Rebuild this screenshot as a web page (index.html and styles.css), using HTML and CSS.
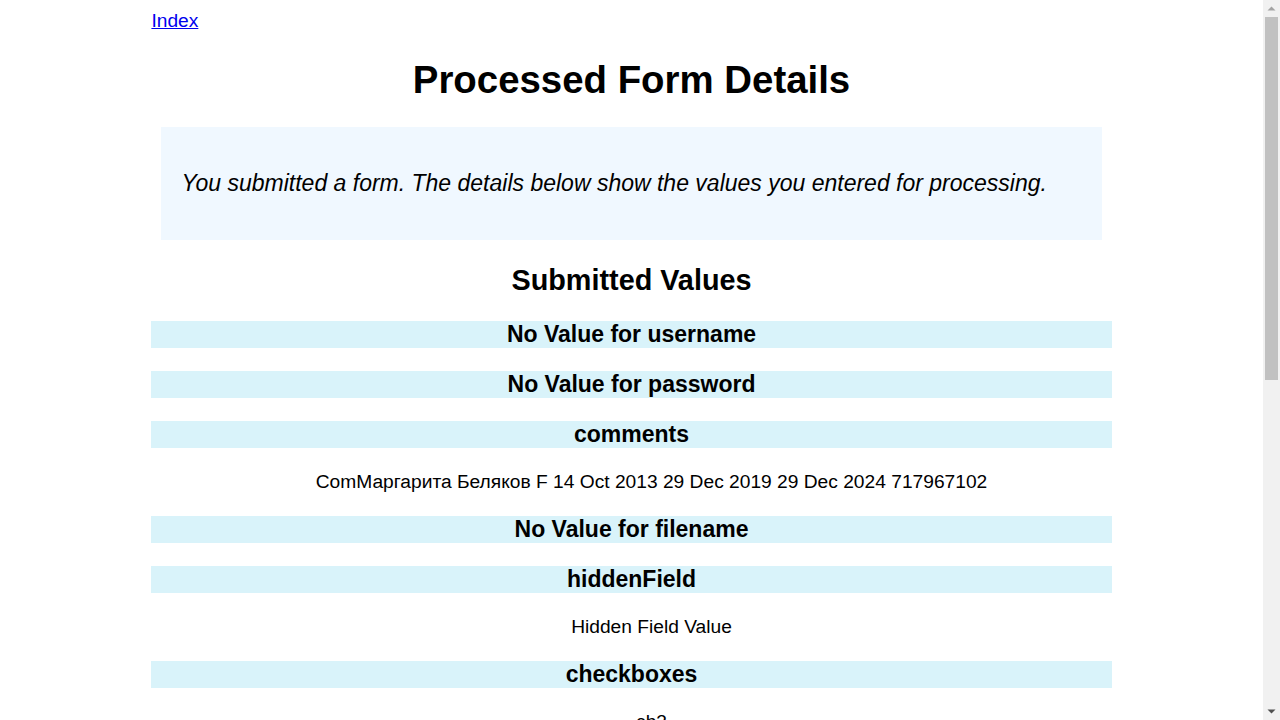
FILE: index.html
```html
<!DOCTYPE html>
<html lang="en">
<head>
<meta charset="utf-8">
<title>Processed Form Details</title>
<link rel="stylesheet" href="styles.css">
</head>
<body>
<div class="page">
  <div class="nav"><a href="#">Index</a></div>
  <h1>Processed Form Details</h1>
  <div class="explanation">
    <p>You submitted a form. The details below show the values you entered for processing.</p>
  </div>
  <h2>Submitted Values</h2>
  <div class="results">
    <h3 class="label">No Value for username</h3>
    <h3 class="label">No Value for password</h3>
    <h3 class="label">comments</h3>
    <ul class="values"><li>ComМаргарита Беляков F 14 Oct 2013 29 Dec 2019 29 Dec 2024 717967102</li></ul>
    <h3 class="label">No Value for filename</h3>
    <h3 class="label">hiddenField</h3>
    <ul class="values"><li>Hidden Field Value</li></ul>
    <h3 class="label">checkboxes</h3>
    <ul class="values"><li>cb3</li></ul>
    <h3 class="label">radioval</h3>
    <ul class="values"><li>rd2</li></ul>
    <h3 class="label">multipleselect</h3>
    <ul class="values"><li>ms4</li></ul>
    <h3 class="label">dropdown</h3>
    <ul class="values"><li>dd3</li></ul>
    <h3 class="label">submitbutton</h3>
    <ul class="values"><li>submit</li></ul>
  </div>
</div>
<div class="scrollbar" aria-hidden="true">
  <div class="sb-arrow sb-up"><svg width="17" height="17" viewBox="0 0 17 17"><path d="M4.5 10.5 L8.5 6.5 L12.5 10.5 Z" fill="#a3a3a3"/></svg></div>
  <div class="sb-track"><div class="sb-thumb"></div></div>
  <div class="sb-arrow sb-down"><svg width="17" height="17" viewBox="0 0 17 17"><path d="M4.5 6.5 L8.5 10.5 L12.5 6.5 Z" fill="#505050"/></svg></div>
</div>
</body>
</html>
```
FILE: styles.css
```css
html {
  background: #ffffff;
}
body {
  margin: 10px 25px 8px 8px;
  font-family: "Liberation Sans", Arial, sans-serif;
  font-size: 19.2px;
  color: #000000;
}
.page {
  width: 77%;
  margin: 0 auto;
}
.nav a {
  color: #0000ee;
  text-decoration: underline;
}
h1 {
  text-align: center;
  font-size: 38.4px;
  margin: 25.7px 0;
}
.explanation {
  margin: 0 10px;
  padding: 20px;
  background: #f0f8ff;
}
.explanation p {
  font-style: italic;
  font-size: 23px;
  margin: 23px 0;
  line-height: 27px;
}
h2 {
  text-align: center;
  font-size: 28.8px;
  margin: 23.9px 0;
}
.label {
  text-align: center;
  font-size: 23px;
  line-height: 27px;
  margin: 23px 0;
  background: #d9f3fa;
}
.values {
  list-style: none;
  margin: 19.2px 0;
  padding-left: 40px;
  text-align: center;
  line-height: 22px;
}
.scrollbar {
  position: fixed;
  top: 0;
  right: 0;
  width: 17px;
  height: 100vh;
  background: #f1f1f1;
  display: flex;
  flex-direction: column;
}
.sb-arrow {
  height: 17px;
  flex: none;
}
.sb-arrow svg {
  display: block;
}
.sb-track {
  flex: 1;
  padding: 0 2px;
}
.sb-thumb {
  height: 363px;
  background: #c1c1c1;
}
```
